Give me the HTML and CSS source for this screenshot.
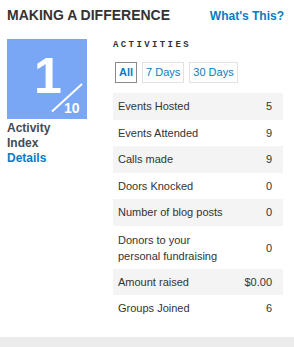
FILE: index.html
```html
<!DOCTYPE html>
<html lang="en">
<head>
    <meta charset="UTF-8">
    <title>Making a Difference</title>
    <link rel="stylesheet" href="styles.css">
</head>
<body>
    <div class="widget">
        <div class="widget-header">
            <span class="widget-title">MAKING A DIFFERENCE</span>
            <a class="whats-this" href="#">What's This?</a>
        </div>
        <div class="widget-body">
            <div class="index-col">
                <div class="index-badge">
                    <span class="index-value">1</span>
                    <svg class="index-slash" width="80" height="80" viewBox="0 0 80 80">
                        <line x1="45" y1="72.5" x2="75" y2="45" stroke="#fff" stroke-width="2"/>
                    </svg>
                    <span class="index-max">10</span>
                </div>
                <div class="index-label">Activity<br>Index</div>
                <a class="index-details" href="#">Details</a>
            </div>
            <div class="activities">
                <div class="activities-title">ACTIVITIES</div>
                <div class="tabs">
                    <a class="tab active" href="#">All</a>
                    <a class="tab" href="#">7 Days</a>
                    <a class="tab" href="#">30 Days</a>
                </div>
                <table class="stats">
                    <tr><td>Events Hosted</td><td class="num">5</td></tr>
                    <tr><td>Events Attended</td><td class="num">9</td></tr>
                    <tr><td>Calls made</td><td class="num">9</td></tr>
                    <tr><td>Doors Knocked</td><td class="num">0</td></tr>
                    <tr><td>Number of blog posts</td><td class="num">0</td></tr>
                    <tr class="tall"><td>Donors to your<br>personal fundraising</td><td class="num">0</td></tr>
                    <tr><td>Amount raised</td><td class="num">$0.00</td></tr>
                    <tr><td>Groups Joined</td><td class="num">6</td></tr>
                </table>
            </div>
        </div>
    </div>
    <div class="footer-bar"></div>
</body>
</html>
```

FILE: styles.css
```css
body {
    margin: 0;
    font-family: "Liberation Sans", Arial, sans-serif;
    background-color: #ffffff;
    color: #333333;
}
a {
    text-decoration: none;
}
.widget {
    padding: 7px 10px 0 7px;
    height: 330px;
    box-sizing: border-box;
}
.widget-header {
    display: flex;
    justify-content: space-between;
    align-items: baseline;
}
.widget-title {
    font-size: 14px;
    font-weight: bold;
    line-height: 16px;
    color: #333333;
}
.whats-this {
    font-size: 12px;
    font-weight: bold;
    color: #0a7bc2;
}
.widget-body {
    display: flex;
    margin-top: 16px;
}
.index-col {
    width: 80px;
    margin-right: 26px;
}
.index-badge {
    width: 80px;
    height: 80px;
    background-color: #7aa6f6;
    position: relative;
    color: #ffffff;
    font-weight: bold;
}
.index-value {
    position: absolute;
    left: 27px;
    top: 12px;
    font-size: 50px;
    line-height: 50px;
}
.index-slash {
    position: absolute;
    left: 0;
    top: 0;
}
.index-max {
    position: absolute;
    left: 57px;
    top: 61px;
    font-size: 14px;
    line-height: 16px;
}
.index-label {
    margin-top: 2px;
    font-size: 12px;
    font-weight: bold;
    line-height: 15px;
    color: #444a55;
}
.index-details {
    display: block;
    font-size: 12px;
    font-weight: bold;
    line-height: 15px;
    color: #0a7bc2;
}
.activities {
    width: 170px;
}
.activities-title {
    font-family: "Liberation Mono", "Courier New", monospace;
    font-size: 9px;
    font-weight: bold;
    letter-spacing: 2.4px;
    line-height: 11px;
    margin-top: 1px;
    color: #333333;
}
.tabs {
    display: flex;
    gap: 5px;
    margin: 11px 0 10px 2px;
}
.tab {
    font-size: 11px;
    line-height: 19px;
    padding: 0 3px;
    border: 1px solid #e2e2e2;
    color: #0a7bc2;
}
.tab.active {
    font-weight: bold;
    border-color: #8a8a8a;
}
.stats {
    width: 170px;
    border-collapse: collapse;
    font-size: 11px;
    line-height: 16px;
    color: #333333;
}
.stats td {
    padding: 5px 5px 5.5px;
    vertical-align: middle;
}
.stats tr.tall td {
    padding-top: 6px;
    padding-bottom: 5px;
}
.stats tr:nth-child(odd) td {
    background-color: #f4f4f4;
}
.stats td.num {
    text-align: right;
    padding-right: 11px;
}
.footer-bar {
    margin-top: 7px;
    height: 10px;
    background-color: #ececec;
}
```
